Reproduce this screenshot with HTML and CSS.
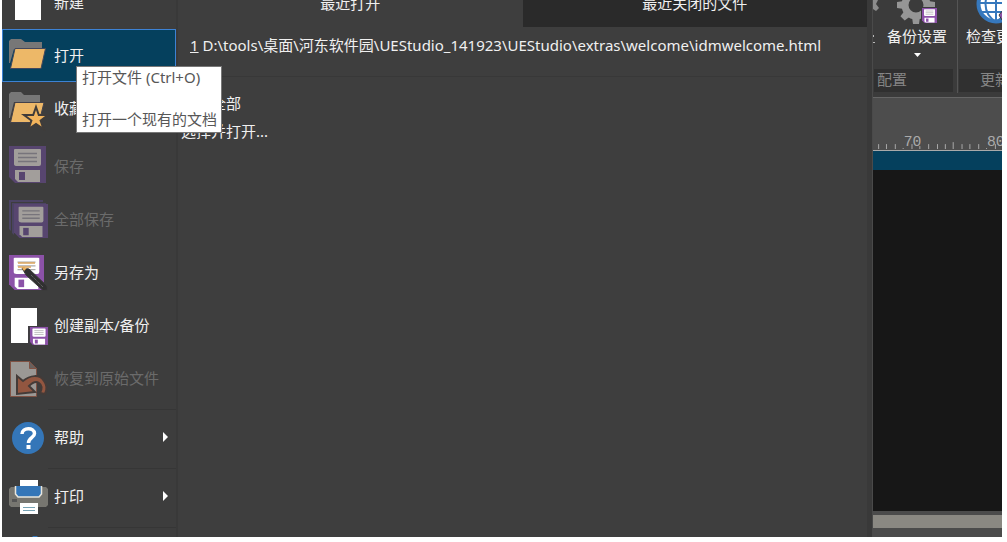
FILE: index.html
```html
<!DOCTYPE html>
<html lang="zh-CN">
<head>
<meta charset="utf-8">
<title>UEStudio</title>
<link rel="stylesheet" href="styles.css">
</head>
<body>
<svg class="defs" aria-hidden="true">
  <defs>
    <symbol id="floppy" viewBox="0 0 37 37">
      <path class="f-body" d="M0 0H37V37H6L0 31Z"/>
      <path class="f-paper" d="M6 3H31Q32 3 32 4V18Q32 20 30 20H8Q5 20 5 18V4Q5 3 6 3Z"/>
      <path class="f-lines" d="M9 7.500H28M9 11.500H28M9 15.500H28" fill="none" stroke-width="1.500"/>
      <path class="f-paper" d="M6 24H31V36H9L6 33Z"/>
      <path class="f-body" d="M10 26H16V34H10Z"/>
    </symbol>
  </defs>
</svg>
<div class="app">
  <nav class="menu" aria-label="文件">
    <button class="item"><svg class="icon" viewBox="0 0 40 40"><path fill="#fff" d="M6 3H32V38H6Z"/></svg><span>新建</span></button>
    <div class="tip-anchor">
      <button class="item item-selected" aria-describedby="open-tip"><svg class="icon" viewBox="0 0 40 40"><path fill="#777" d="M0 6 2 4H12L16 7H33V14H5L1 28H0Z"/><path fill="#edb868" stroke="#43475c" d="M6 13.500H36.500L32 33.500H1.500Z"/></svg><span>打开</span></button>
      <div class="tooltip" role="tooltip" id="open-tip">打开文件 (Ctrl+O)<br><br>打开一个现有的文档</div>
    </div>
    <button class="item"><svg class="icon" viewBox="0 0 40 40"><path fill="#777" d="M0 6 2 4H12L15 7H31V14H5L1 30H0Z"/><path fill="#edb868" stroke="#43414a" d="M6 14.500H35L30 34.500H1.500Z"/><path fill="#f2b45c" stroke="#403c3a" stroke-width="2" d="M27 19 29.800 27H39L31.600 32.500 34.500 41 27 36 19.500 41 22.400 32.500 15 27H24.200Z"/></svg><span>收藏夹</span></button>
    <div class="gap"></div>
    <button class="item" disabled><svg class="icon floppy-off" viewBox="0 0 40 40"><use href="#floppy" x="0" y="0" width="37" height="37"/></svg><span>保存</span></button>
    <button class="item" disabled><svg class="icon floppy-off" viewBox="0 0 40 40"><path fill="#4b4363" d="M0 1H34V3H2V32L0 30ZM3 4H37V5H5V36L3 34Z"/><use href="#floppy" x="5" y="5" width="34" height="34"/></svg><span>全部保存</span></button>
    <button class="item"><svg class="icon floppy-on" viewBox="0 0 40 40"><use href="#floppy" x="0" y="3" width="35" height="35"/><path d="M9 11H26M9 15H22" stroke="#dda65e" stroke-width="1.500"/><path fill="#303030" stroke="#3c3c3c" d="M13 16 20 17 38 34 38.500 38 34 38.500 17 23Z"/><path fill="#f0b35b" d="M12.500 15 18 16 15 19Z"/><path stroke="#777" stroke-dasharray="1 1" d="M22 23 34 35"/></svg><span>另存为</span></button>
    <button class="item"><svg class="icon floppy-on" viewBox="0 0 40 40"><path fill="#fff" d="M2 3H28V38H2Z"/><path fill="#403d42" d="M19 21H40V40H19Z"/><use href="#floppy" x="21" y="22" width="18" height="18"/></svg><span>创建副本/备份</span></button>
    <button class="item" disabled><svg class="icon" viewBox="0 0 40 40"><path fill="#9b9895" stroke="#805244" d="M1.500 3.500H20.500L27.500 10.500V38.500H1.500Z"/><path fill="#68605d" stroke="#805244" d="M20.500 3.500V10.500H27.500Z"/><path fill="#925640" stroke="#443b38" stroke-width="2" d="M8 18 14 23C21 17 31 16 35 23 38 27 38 32 36 36L31 35C33 31 33 27 30 25 27 23 23 25 20 28L26 34 8 36Z"/></svg><span>恢复到原始文件</span></button>
    <div class="separator" role="separator"></div>
    <button class="item"><svg class="icon" viewBox="0 0 40 40"><circle cx="19" cy="21" r="16" fill="#3476b8"/><path fill="none" stroke="#fff" stroke-width="3.500" d="M13 17C13 10 25.500 10 25.500 16.500 25.500 21 19.500 20.500 19.500 26"/><path fill="#fff" d="M17.500 28H21.500V32H17.500Z"/></svg><span>帮助</span><svg class="arrow" viewBox="0 0 5 10"><path d="M0 0 5 5 0 10Z"/></svg></button>
    <div class="separator" role="separator"></div>
    <button class="item"><svg class="icon" viewBox="0 0 40 40"><path fill="#777670" d="M2 11H37L39 13V29L37 31H2L0 29V13Z"/><path fill="#fff" d="M11 4H29V11H11Z"/><path fill="#3476b8" stroke="#e8e6dd" stroke-width="1.500" d="M6.500 10V18L9 21H30L32.500 18V10"/><path fill="#555" d="M3 23H8V26H3Z"/><path fill="#fff" d="M11 27H29V38H11Z"/><path stroke="#77a3b4" d="M14 31.500H26M14 34.500H26"/></svg><span>打印</span><svg class="arrow" viewBox="0 0 5 10"><path d="M0 0 5 5 0 10Z"/></svg></button>
    <div class="separator" role="separator"></div>
    <button class="item" aria-hidden="true"><svg class="icon" viewBox="0 0 40 40"><path fill="#3476b8" d="M24 1H28L34 8H18Z"/></svg></button>
  </nav>

  <main class="recent">
    <div class="tabs">
      <button class="tab tab-active">最近打开</button>
      <button class="tab">最近关闭的文件</button>
    </div>
    <a class="file" href="#"><u>1</u> D:\tools\桌面\河东软件园\UEStudio_141923\UEStudio\extras\welcome\idmwelcome.html</a>
    <div class="actions">
      <a class="action" href="#">打开全部</a>
      <a class="action" href="#">选择并打开...</a>
    </div>
  </main>

  <div class="editor">
    <div class="ribbon">
      <section class="group">
        <button class="tool">
          <svg class="tool-icon" viewBox="0 0 60 40"><g transform="translate(29 20)"><circle r="11" fill="none" stroke="#969696" stroke-width="7"/><g fill="#969696"><path id="tooth" d="M-3-19H3L4-12H-4Z"/><use href="#tooth" transform="rotate(45)"/><use href="#tooth" transform="rotate(90)"/><use href="#tooth" transform="rotate(135)"/><use href="#tooth" transform="rotate(180)"/><use href="#tooth" transform="rotate(225)"/><use href="#tooth" transform="rotate(270)"/><use href="#tooth" transform="rotate(315)"/></g></g><g class="floppy-on"><path fill="#3b3b3b" d="M34 22H51V40H34Z"/><use href="#floppy" x="35" y="23" width="15" height="15"/></g></svg>
          <span>备份设置</span>
          <svg class="down" viewBox="0 0 7 4"><path d="M0 0H7L3.500 4Z"/></svg>
        </button>
        <div class="caption">配置</div>
        <svg class="neighbor" viewBox="0 0 8 45"><path fill="#8c8c8c" d="M0 0H5L3 4 6 8 3 11 0 9Z"/><path fill="#b9b9b9" d="M0 35H1V37H0ZM0 42H2V43H0Z"/></svg>
      </section>
      <section class="group group-update">
        <button class="tool">
          <svg class="tool-icon" viewBox="0 0 60 40"><circle cx="30" cy="19" r="17.500" fill="#fff" stroke="#3678bd" stroke-width="4"/><path fill="none" stroke="#3678bd" stroke-width="2" d="M12 18H48M16 27H44M30 1V37M30 1C16 10 16 28 30 37M30 1C44 10 44 28 30 37"/><path fill="#8c52a8" stroke="#3b3b3b" d="M33 30 43 18 48 22V34L41 31 36 35Z"/></svg>
          <span>检查更新</span>
        </button>
        <div class="caption">更新</div>
      </section>
    </div>
    <svg class="ruler" viewBox="0 0 129 53"><path fill="none" stroke="#aaa" d="M4.500 47V52M12.500 47V52M21.500 47V52M29.500 51V52M38.500 47V52M46.500 49V52M55.500 47V52M64.500 47V52M72.500 47V52M80.500 45V52M89.500 47V52M97.500 47V52M106.500 47V52M114.500 51V52M123.500 47V52"/><text x="30" y="49">70</text><text x="115" y="49">80</text></svg>
    <div class="current-line"></div>
    <div class="code"></div>
    <div class="scrollbar"><div class="thumb"></div></div>
  </div>
</div>
</body>
</html>
```
FILE: styles.css
```css
* { box-sizing: border-box; }

body {
  margin: 0;
  height: 100vh;
  padding: 0 5px 5px 2px;
  background: #fff;
  color: #f0f0f0;
  font: 15px/20px "Noto Sans", "Noto Sans CJK SC", sans-serif;
  overflow: hidden;
}

button {
  border: 0;
  background: none;
  color: inherit;
  font: inherit;
}

a { color: inherit; text-decoration: none; }

.defs { position: absolute; width: 0; height: 0; }

.app {
  display: flex;
  height: 100%;
  overflow: hidden;
  background: #3e3e3e;
}

/* File menu, scrolled part of one row down */
.menu {
  flex: 0 0 176px;
  margin-top: -24px;
  border-right: 2px solid #393939;
  background: #3d3d3d;
}

.item {
  display: flex;
  align-items: center;
  gap: 5px;
  width: 100%;
  height: 53px;
  padding: 0 8px 2px 7px;
  text-align: left;
  white-space: nowrap;
}

.item:disabled { color: #6b6b6b; }

.item-selected {
  background: #05405d;
  outline: 1px solid #3d82d4;
  outline-offset: -1px;
}

.icon { flex: none; width: 40px; height: 40px; overflow: visible; }
.arrow { width: 5px; height: 10px; margin-left: auto; fill: #fff; }

.floppy-on { --body: #8c52a8; --paper: #fff; --lines: #aaa; }
.floppy-off { --body: #57456f; --paper: #a29e9b; --lines: #77747b; }
.f-body { fill: var(--body); }
.f-paper { fill: var(--paper); }
.f-lines { stroke: var(--lines); }

.gap { height: 5px; }

.separator {
  height: 6px;
  margin-left: 46px;
  padding-top: 4px;
}

.separator::before {
  content: "";
  display: block;
  height: 1px;
  background: #363636;
}

.tip-anchor { position: relative; }

.tooltip {
  position: absolute;
  top: 37px;
  left: 74px;
  z-index: 1;
  width: 146px;
  padding: 0 5px 2px;
  border: 1px solid #777;
  background: #fff;
  color: #575757;
  line-height: 21px;
  white-space: nowrap;
}

/* Recent files */
.recent {
  flex: 1;
  min-width: 0;
  margin-top: -20px;
}

.tabs { display: flex; height: 47px; }

.tab {
  flex: 1;
  padding: 0 0 2px;
  background: #2a2a2a;
}

.tab-active { background: #3e3e3e; }

.file {
  display: block;
  padding: 8px 12px 21px;
  border-bottom: 1px solid #383838;
  white-space: nowrap;
}

.actions { padding: 12px 3px; }
.action { display: block; line-height: 28px; }

/* Editor window behind the menu */
.editor {
  display: flex;
  flex-direction: column;
  flex: 0 0 135px;
  border-left: 5px solid #393939;
  box-shadow: inset 1px 0 #4a4a4a;
  padding-left: 1px;
  overflow: hidden;
}

.ribbon {
  display: flex;
  height: 98px;
  padding-bottom: 4px;
  border-bottom: 1px solid #666;
  background: #3b3b3b;
}

.group {
  position: relative;
  display: flex;
  flex-direction: column;
  flex: 0 0 84px;
  border-right: 1px solid #555;
}

.group .tool { margin-left: 4px; }
.group-update .tool { margin-left: -2px; }

.tool {
  display: flex;
  flex-direction: column;
  align-items: center;
  width: 80px;
  height: 84px;
  margin-top: -15px;
  padding: 0;
  white-space: nowrap;
}

.tool-icon { flex: none; width: 60px; height: 40px; margin-bottom: 1px; }
.down { width: 7px; height: 4px; margin-top: 7px; fill: #fff; }

.caption {
  height: 23px;
  margin: 0 4px 0 1px;
  padding: 0 3px;
  background: #303030;
  color: #858585;
}

.group-update .caption { padding-left: 21px; white-space: nowrap; }

.neighbor { position: absolute; top: 0; left: 0; width: 8px; height: 45px; }

.ruler {
  flex: none;
  width: 129px;
  height: 53px;
  border-bottom: 1px solid #aaa;
  background: #4d4d4d;
  fill: #aaa;
  font: 15px "Liberation Mono", monospace;
}

.current-line { height: 19px; background: #05405d; }
.code { flex: 1; background: #171717; }

.scrollbar {
  height: 26px;
  padding: 4px 0 9px;
  background: #4b4b4b;
}

.thumb { height: 13px; background: #8a8882; }
```
